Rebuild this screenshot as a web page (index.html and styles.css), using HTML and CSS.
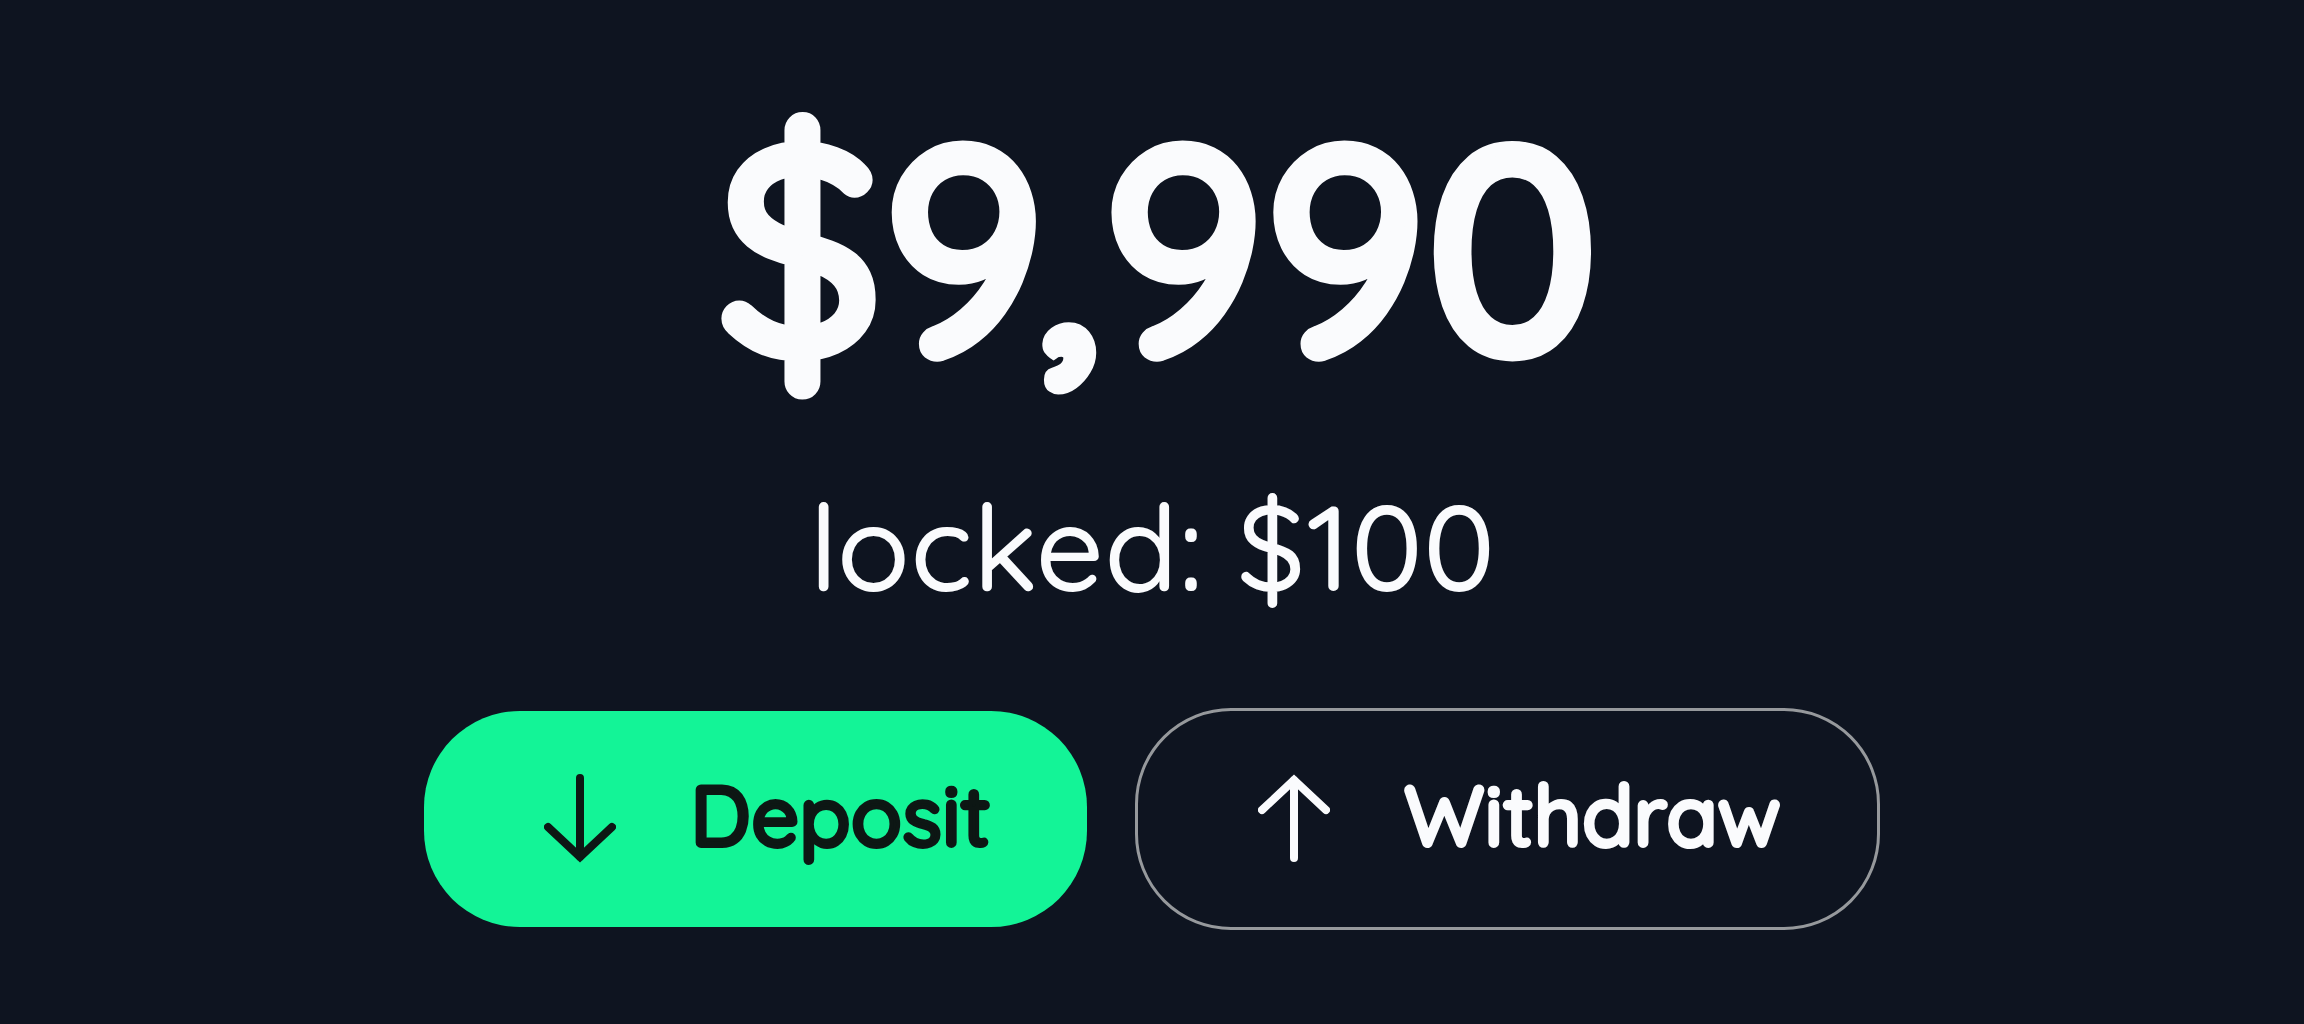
FILE: index.html
```html
<!DOCTYPE html>
<html lang="en">
<head>
<meta charset="utf-8">
<meta name="viewport" content="width=device-width, initial-scale=1">
<title>Wallet balance</title>
<link rel="stylesheet" href="styles.css">
</head>
<body>
<main class="wallet">
  <h1 class="balance">$9,990</h1>
  <p class="locked">locked: $100</p>
  <div class="actions">
    <button class="action action-deposit" type="button">
      <svg class="arrow" viewBox="0 0 72 90" aria-hidden="true"><path d="M36 4V83M4 53L36 83L68 53"/></svg>
      <span class="label">Deposit</span>
    </button>
    <button class="action action-withdraw" type="button">
      <svg class="arrow" viewBox="0 0 72 90" aria-hidden="true"><path d="M36 84V6M4 36L36 6L68 36"/></svg>
      <span class="label">Withdraw</span>
    </button>
  </div>
</main>
</body>
</html>
```

FILE: styles.css
```css
* {
  box-sizing: border-box;
}

body {
  margin: 0;
  min-height: 100vh;
  background: #0e1420;
  color: #fafbfd;
  font-family: Quicksand, Lato, sans-serif;
}

.wallet {
  display: flex;
  flex-direction: column;
  align-items: center;
  padding: 84px 24px;
}

.balance {
  margin: 0;
  padding-left: 12px;
  font-size: 288px;
  line-height: 320px;
  font-weight: 500;
  -webkit-text-stroke: 13px currentColor;
}

.locked {
  margin: 70px 0 0;
  font-size: 120px;
  line-height: 144px;
  font-weight: 500;
}

.actions {
  display: flex;
  flex-wrap: wrap;
  justify-content: center;
  align-items: center;
  gap: 48px;
  margin-top: 90px;
}

.action {
  display: flex;
  align-items: center;
  gap: 74px;
  padding: 60px 96px 60px 120px;
  border: 0;
  border-radius: 96px;
  font-family: inherit;
  font-size: 84px;
  line-height: 88px;
  font-weight: 500;
  cursor: pointer;
}

.action-deposit {
  background: #13f497;
  color: #0d1714;
}

.action-withdraw {
  border: 3px solid #96999c;
  background: transparent;
  color: #fafbfd;
}

.label {
  padding-bottom: 8px;
  -webkit-text-stroke: 4px currentColor;
}

.arrow {
  width: 72px;
  height: 90px;
  fill: none;
  stroke: currentColor;
  stroke-width: 8;
  stroke-linecap: round;
}
```
